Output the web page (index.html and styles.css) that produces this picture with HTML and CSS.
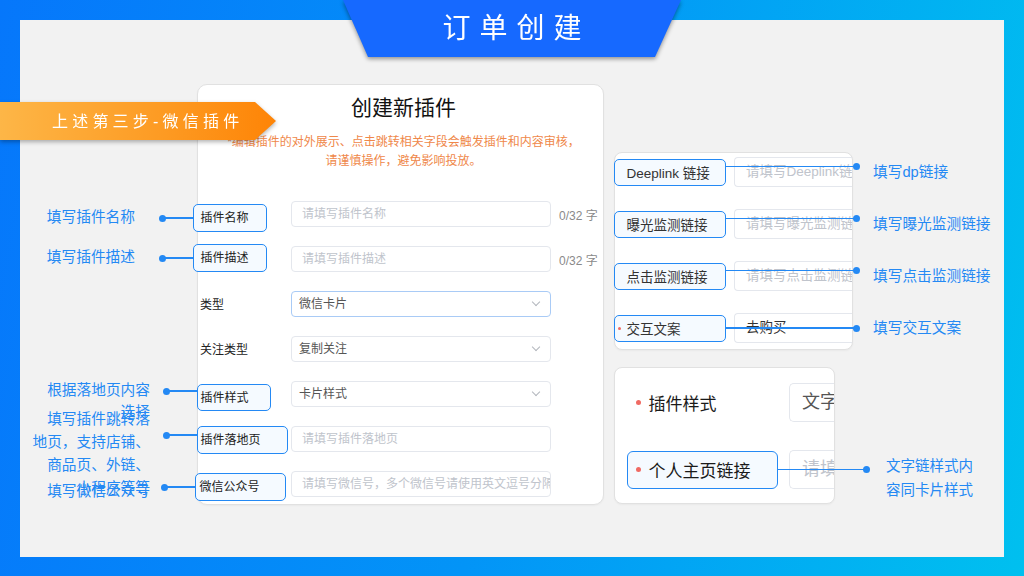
FILE: index.html
```html
<!DOCTYPE html>
<html lang="zh-CN">
<head>
    <meta charset="UTF-8">
    <meta name="viewport" content="width=device-width, initial-scale=1.0">
    <title>订单创建 - 微信插件</title>
    <link rel="stylesheet" href="styles.css">
</head>
<body>
    <div class="frame">
        <div class="title-tab"><span>订单创建</span></div>
        <div class="step-ribbon"><span>上述第三步-微信插件</span></div>

        <div class="board">
            <!-- 创建新插件 表单 -->
            <section class="card plugin-form">
                <div class="form-head">
                    <h2>创建新插件</h2>
                    <p class="notice">*编辑插件的对外展示、点击跳转相关字段会触发插件和内容审核，<br>请谨慎操作，避免影响投放。</p>
                </div>

                <div class="form-rows">
                    <div class="row">
                        <div class="row-label">
                            <span class="tag">插件名称
                                <span class="note-l"><em>填写插件名称</em></span>
                            </span>
                        </div>
                        <div class="field">请填写插件名称</div>
                        <span class="count">0/32 字</span>
                    </div>
                    <div class="row">
                        <div class="row-label">
                            <span class="tag tag-up">插件描述
                                <span class="note-l"><em>填写插件描述</em></span>
                            </span>
                        </div>
                        <div class="field">请填写插件描述</div>
                        <span class="count">0/32 字</span>
                    </div>
                    <div class="row">
                        <div class="row-label">类型</div>
                        <div class="field select focus">微信卡片</div>
                    </div>
                    <div class="row">
                        <div class="row-label">关注类型</div>
                        <div class="field select">复制关注</div>
                    </div>
                    <div class="row">
                        <div class="row-label">
                            <span class="tag tag-b">插件样式
                                <span class="note-l note-style"><em>根据落地页内容选择</em></span>
                            </span>
                        </div>
                        <div class="field select">卡片样式</div>
                    </div>
                    <div class="row">
                        <div class="row-label">
                            <span class="tag tag-b wide">插件落地页
                                <span class="note-l note-landing"><em>填写插件跳转落<br>地页，支持店铺、<br>商品页、外链、<br>小程序等等</em></span>
                            </span>
                        </div>
                        <div class="field">请填写插件落地页</div>
                    </div>
                    <div class="row">
                        <div class="row-label">
                            <span class="tag tag-c wide">微信公众号
                                <span class="note-l note-wechat"><em>填写微信公众号</em></span>
                            </span>
                        </div>
                        <div class="field">请填写微信号，多个微信号请使用英文逗号分隔</div>
                    </div>
                </div>
            </section>

            <div class="side">
                <!-- 链接设置 -->
                <section class="card link-card">
                    <div class="link-row">
                        <span class="tag-r">Deeplink 链接
                            <span class="note-r"><em>填写dp链接</em></span>
                        </span>
                        <div class="link-input">请填写Deeplink链接</div>
                    </div>
                    <div class="link-row">
                        <span class="tag-r">曝光监测链接
                            <span class="note-r"><em>填写曝光监测链接</em></span>
                        </span>
                        <div class="link-input">请填写曝光监测链接</div>
                    </div>
                    <div class="link-row">
                        <span class="tag-r">点击监测链接
                            <span class="note-r"><em>填写点击监测链接</em></span>
                        </span>
                        <div class="link-input">请填写点击监测链接</div>
                    </div>
                    <div class="link-row">
                        <span class="tag-r has-req"><i class="req"></i>交互文案
                            <span class="note-r note-mid"><em>填写交互文案</em></span>
                        </span>
                        <div class="link-input filled">去购买</div>
                    </div>
                </section>

                <!-- 文字链样式 -->
                <section class="card style-card">
                    <div class="style-row">
                        <span class="style-label"><i class="req big"></i>插件样式</span>
                        <div class="style-input filled">文字链</div>
                    </div>
                    <div class="style-row">
                        <span class="style-label boxed"><i class="req big"></i>个人主页链接
                            <span class="note-r note-text"><em>文字链样式内<br>容同卡片样式</em></span>
                        </span>
                        <div class="style-input">请填写个人主页链接</div>
                    </div>
                </section>
            </div>
        </div>
    </div>
</body>
</html>
```

FILE: styles.css
```css
* {
    box-sizing: border-box;
}
body {
    margin: 0;
    font-family: "Liberation Sans", "Noto Sans CJK SC", sans-serif;
    color: #222;
}
.frame {
    position: relative;
    width: 1024px;
    height: 576px;
    padding: 20px;
    overflow: hidden;
    background: linear-gradient(100deg, #0677fb 0%, #0394f7 50%, #00c0ef 100%);
}
.board {
    display: flex;
    align-items: flex-start;
    gap: 10px;
    width: 984px;
    height: 537px;
    padding: 64px 0 0 177px;
    background: #f2f2f2;
}

/* 顶部标题 */
.title-tab {
    position: absolute;
    left: 343px;
    top: 0;
    width: 338px;
    height: 57px;
    z-index: 3;
    filter: drop-shadow(0 2px 2px rgba(0,0,0,0.4));
}
.title-tab span {
    display: block;
    height: 100%;
    background: #1669ff;
    clip-path: polygon(0 0, 100% 0, calc(100% - 26px) 100%, 25px 100%);
    color: #fff;
    font-size: 28px;
    letter-spacing: 9px;
    text-indent: 9px;
    line-height: 57px;
    text-align: center;
}

/* 橙色步骤条 */
.step-ribbon {
    position: absolute;
    left: 0;
    top: 102px;
    width: 276px;
    height: 38px;
    z-index: 3;
    filter: drop-shadow(0 2px 2px rgba(0,0,0,0.3));
}
.step-ribbon span {
    display: block;
    height: 100%;
    padding-left: 52px;
    background: linear-gradient(90deg, #fdb647 0%, #fd9a22 60%, #fe8406 100%);
    clip-path: polygon(0 0, 255px 0, 100% 50%, 255px 100%, 0 100%);
    color: #fff;
    font-size: 16px;
    letter-spacing: 4.2px;
    line-height: 39px;
}

.card {
    background: #fff;
    border: 1px solid #e1e1e1;
    border-radius: 10px;
    box-shadow: 0 1px 2px rgba(0,0,0,0.04);
}

/* 主表单 */
.plugin-form {
    width: 407px;
    height: 421px;
    flex: none;
}
.form-head {
    padding: 9px 0 0 6px;
    text-align: center;
}
.form-head h2 {
    margin: 0;
    font-size: 21px;
    line-height: 28px;
    font-weight: normal;
    color: #111;
}
.notice {
    margin: 11px 0 0;
    font-size: 12px;
    line-height: 19px;
    color: #ef884a;
}
.form-rows {
    margin-top: 30px;
}
.row {
    display: flex;
    align-items: center;
    height: 26px;
    margin-bottom: 19px;
}
.row-label {
    display: flex;
    align-items: center;
    width: 93px;
    height: 100%;
    flex: none;
    padding-left: 2px;
    padding-bottom: 1px;
    font-size: 12px;
    color: #222;
}
.field {
    position: relative;
    width: 260px;
    height: 26px;
    flex: none;
    padding: 0 10px;
    border: 1px solid #e4e7ed;
    border-radius: 4px;
    font-size: 12px;
    line-height: 24px;
    color: #c0c4cc;
    white-space: nowrap;
    overflow: hidden;
}
.field.select {
    padding-left: 7px;
    color: #555;
}
.field.select::after {
    content: "";
    position: absolute;
    right: 11px;
    top: 7px;
    width: 5px;
    height: 5px;
    border-right: 1px solid #b3b7be;
    border-bottom: 1px solid #b3b7be;
    transform: rotate(45deg);
}
.field.focus {
    border-color: #a9cbf6;
}
.count {
    margin-left: 8px;
    font-size: 12px;
    color: #8a8a8a;
}

/* 标注框 */
.tag {
    position: relative;
    display: flex;
    align-items: center;
    align-self: flex-start;
    width: 74px;
    height: 28px;
    margin: 3px 0 0 -7px;
    padding: 0 0 3px 6.5px;
    border: 1.5px solid #2489f4;
    border-radius: 5px;
    background: #f5faff;
}
.tag-up {
    margin-top: -2px;
}
.tag-b {
    height: 27px;
    margin: 3px 0 0 -3px;
    padding-left: 2.5px;
}
.tag-b.wide {
    margin-top: 0;
    height: 28px;
}
.tag-c {
    margin: 2px 0 0 -5px;
    padding-left: 3.5px;
}
.tag.wide {
    width: 91px;
}

/* 左侧标注 */
.note-l,
.note-r {
    position: absolute;
    top: 50%;
    height: 1.5px;
    margin-top: -0.75px;
    background: #2489f4;
}
.note-l {
    right: 100%;
    width: 32px;
}
.note-l::before,
.note-r::after {
    content: "";
    position: absolute;
    top: -2.75px;
    width: 7px;
    height: 7px;
    border-radius: 50%;
    background: #2489f4;
}
.note-l::before {
    left: -3.5px;
}
.note-r::after {
    right: -3.5px;
}
.note-l em,
.note-r em {
    position: absolute;
    font-style: normal;
    font-size: 14.7px;
    line-height: 22px;
    color: #2489f4;
    white-space: nowrap;
}
.note-l em {
    right: calc(100% + 27px);
    top: -11px;
    text-align: right;
}
.note-style {
    top: 6px;
}
.note-style em {
    right: calc(100% + 16px);
    width: 106px;
    white-space: normal;
}
.note-landing {
    top: 8px;
}
.note-landing em {
    right: calc(100% + 16px);
    top: -26px;
    line-height: 23px;
}
.note-wechat em {
    right: calc(100% + 14px);
    top: -6px;
}

/* 右侧卡片 */
.side {
    display: flex;
    flex-direction: column;
    align-items: flex-start;
    gap: 17px;
    margin-top: 68px;
}
.link-card {
    width: 239px;
    height: 198px;
    padding-top: 4px;
    border-radius: 8px;
}
.link-row {
    display: flex;
    align-items: center;
    height: 30px;
    margin-bottom: 22px;
}
.tag-r {
    position: relative;
    display: flex;
    align-items: center;
    width: 112px;
    height: 27px;
    flex: none;
    margin-left: -1px;
    padding-left: 11.5px;
    border: 1.5px solid #2489f4;
    border-radius: 5px;
    background: #f5faff;
    font-size: 13.5px;
    color: #333;
}
.tag-r.has-req {
    padding-left: 3px;
}
.req {
    display: block;
    flex: none;
    width: 3px;
    height: 3px;
    margin-right: 5.5px;
    border-radius: 50%;
    background: #f06a63;
}
.req.big {
    width: 5px;
    height: 5px;
    margin-right: 8px;
}
.link-input {
    flex: 1;
    height: 30px;
    margin-left: 8px;
    padding-left: 11px;
    border: 1px solid #e4e7ed;
    border-right: none;
    border-radius: 4px 0 0 4px;
    font-size: 13.5px;
    line-height: 28px;
    color: #c0c4cc;
    white-space: nowrap;
    overflow: hidden;
}
.link-input.filled {
    color: #333;
}
.note-r {
    left: 100%;
    top: 7px;
    width: 131px;
}
.note-r em {
    left: calc(100% + 17px);
    top: -5px;
}
.note-mid {
    top: 50%;
}
.note-mid em {
    top: -10px;
}

.style-card {
    width: 221px;
    height: 137px;
    padding: 15px 0 0 12px;
    border-radius: 8px;
}
.style-row {
    display: flex;
    align-items: center;
    height: 39px;
    margin-bottom: 28px;
}
.style-label {
    position: relative;
    display: flex;
    align-items: center;
    width: 151px;
    height: 38px;
    flex: none;
    padding-left: 7.5px;
    border: 1.5px solid transparent;
    border-radius: 6px;
    font-size: 17px;
    color: #1a1a1a;
}
.style-label.boxed {
    border-color: #2489f4;
    background: #f5faff;
}
.style-input {
    flex: 1;
    height: 39px;
    margin-left: 11px;
    padding-left: 12px;
    border: 1px solid #e4e7ed;
    border-right: none;
    border-radius: 5px 0 0 5px;
    font-size: 18px;
    line-height: 37px;
    color: #c0c4cc;
    white-space: nowrap;
    overflow: hidden;
}
.style-input.filled {
    color: #555;
}
.note-text {
    top: 50%;
    width: 89px;
}
.note-text em {
    left: calc(100% + 20px);
    top: -15px;
    font-size: 14.5px;
    line-height: 24px;
}
```
